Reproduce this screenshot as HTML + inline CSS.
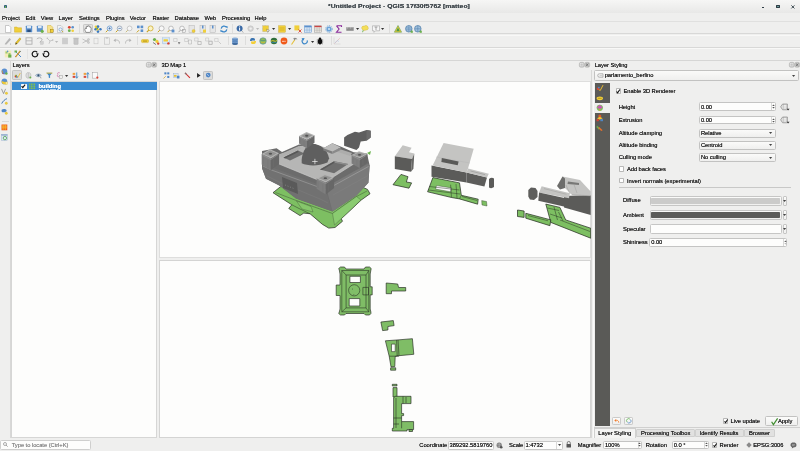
<!DOCTYPE html>
<html><head><meta charset="utf-8"><style>
*{box-sizing:border-box;margin:0;padding:0}
html,body{width:800px;height:451px;overflow:hidden;background:#efefee;font-family:"Liberation Sans",sans-serif;font-size:5.6px;color:#2e3436}
.a{position:absolute}
.t{position:absolute;white-space:nowrap;line-height:1;letter-spacing:-0.05px;text-shadow:0 0 0.3px currentColor}
#w{position:absolute;left:0;top:0;width:800px;height:451px;will-change:transform}
svg{overflow:visible}
</style></head><body><div id="w">
<div class="a" style="left:0.00px;top:0.00px;width:800.00px;height:13.00px;background:linear-gradient(#f6f6f5,#e8e8e7)"></div>
<div class="a" style="left:4.30px;top:4.60px;width:2.60px;height:3.50px;background:#2f5f7a;border-radius:0.8px"></div>
<div class="a" style="left:5.20px;top:6.20px;width:1.20px;height:1.60px;background:#6fb04c"></div>
<div class="t" style="left:328.20px;top:2.93px;font-size:6.1px;color:#434b50;font-weight:bold;letter-spacing:0;transform:scaleX(1.12);transform-origin:0 0">*Untitled Project - QGIS 17f30f5762 [matteo]</div>
<div class="a" style="left:761.60px;top:7.00px;width:2.60px;height:1.00px;background:#2e3c44"></div>
<div class="a" style="left:776.30px;top:4.60px;width:3.60px;height:3.60px;border:1px solid #2e3c44;background:#6a9a9a;border-radius:0.4px"></div>
<svg class="a" style="left:790.5px;top:4.6px" width="3.8" height="3.8" viewBox="0 0 5 5"><path d="M0.5,0.5L4.5,4.5M4.5,0.5L0.5,4.5" stroke="#2e3c44" stroke-width="1.2"/></svg>
<div class="a" style="left:0.00px;top:13.00px;width:800.00px;height:9.00px;background:#efefee"></div>
<div class="t" style="left:2.00px;top:15.88px;font-size:5.8px;color:#222;font-weight:normal;">Pro<u style="text-decoration-thickness:0.5px;text-underline-offset:0.6px">j</u>ect</div>
<div class="t" style="left:25.40px;top:15.88px;font-size:5.8px;color:#222;font-weight:normal;"><u style="text-decoration-thickness:0.5px;text-underline-offset:0.6px">E</u>dit</div>
<div class="t" style="left:40.80px;top:15.88px;font-size:5.8px;color:#222;font-weight:normal;"><u style="text-decoration-thickness:0.5px;text-underline-offset:0.6px">V</u>iew</div>
<div class="t" style="left:58.60px;top:15.88px;font-size:5.8px;color:#222;font-weight:normal;"><u style="text-decoration-thickness:0.5px;text-underline-offset:0.6px">L</u>ayer</div>
<div class="t" style="left:79.10px;top:15.88px;font-size:5.8px;color:#222;font-weight:normal;"><u style="text-decoration-thickness:0.5px;text-underline-offset:0.6px">S</u>ettings</div>
<div class="t" style="left:105.90px;top:15.88px;font-size:5.8px;color:#222;font-weight:normal;"><u style="text-decoration-thickness:0.5px;text-underline-offset:0.6px">P</u>lugins</div>
<div class="t" style="left:129.80px;top:15.88px;font-size:5.8px;color:#222;font-weight:normal;">Vect<u style="text-decoration-thickness:0.5px;text-underline-offset:0.6px">o</u>r</div>
<div class="t" style="left:152.40px;top:15.88px;font-size:5.8px;color:#222;font-weight:normal;"><u style="text-decoration-thickness:0.5px;text-underline-offset:0.6px">R</u>aster</div>
<div class="t" style="left:174.60px;top:15.88px;font-size:5.8px;color:#222;font-weight:normal;"><u style="text-decoration-thickness:0.5px;text-underline-offset:0.6px">D</u>atabase</div>
<div class="t" style="left:204.40px;top:15.88px;font-size:5.8px;color:#222;font-weight:normal;"><u style="text-decoration-thickness:0.5px;text-underline-offset:0.6px">W</u>eb</div>
<div class="t" style="left:221.90px;top:15.88px;font-size:5.8px;color:#222;font-weight:normal;">Pro<u style="text-decoration-thickness:0.5px;text-underline-offset:0.6px">c</u>essing</div>
<div class="t" style="left:254.60px;top:15.88px;font-size:5.8px;color:#222;font-weight:normal;"><u style="text-decoration-thickness:0.5px;text-underline-offset:0.6px">H</u>elp</div>
<div class="a" style="left:0.00px;top:21.30px;width:800.00px;height:13.20px;background:#efefee;border-top:1px solid #e0e0df;border-bottom:1px solid #d8d8d7"></div>
<div class="a" style="left:0.00px;top:34.50px;width:800.00px;height:13.10px;background:#efefee;border-top:0.8px solid #f8f8f7;border-bottom:1px solid #d8d8d7"></div>
<div class="a" style="left:0.00px;top:47.60px;width:800.00px;height:13.10px;background:#efefee;border-top:0.8px solid #f8f8f7;border-bottom:1px solid #d6d6d5"></div>
<div class="a" style="left:82.80px;top:23.80px;width:9.90px;height:9.30px;background:#e2e2e1;border:0.6px solid #c8c8c7;border-radius:1.2px"></div>
<svg class="a" style="left:4.30px;top:24.60px" width="8.00" height="8.00" viewBox="0 0 8 8"><path d="M1.5,0.5h3.5l1.8,1.8v5.2h-5.3z" fill="#fff" stroke="#9a9a9a" stroke-width="0.5"/></svg>
<svg class="a" style="left:14.20px;top:24.60px" width="8.00" height="8.00" viewBox="0 0 8 8"><path d="M0.5,2h2.5l0.8,0.8h3.7v4.4h-7z" fill="#f0cf3a" stroke="#c9a31d" stroke-width="0.4"/></svg>
<svg class="a" style="left:25.20px;top:24.60px" width="8.00" height="8.00" viewBox="0 0 8 8"><rect x="0.8" y="0.8" width="6.4" height="6.4" fill="#5b90cc" rx="0.5"/><rect x="2" y="1" width="4" height="2.3" fill="#dde8f4"/><rect x="2.3" y="4.6" width="3.4" height="2.4" fill="#2b4f7e"/></svg>
<svg class="a" style="left:35.50px;top:24.60px" width="8.00" height="8.00" viewBox="0 0 8 8"><rect x="0.8" y="0.8" width="6" height="6" fill="#5b90cc" rx="0.5"/><rect x="2" y="1" width="3.6" height="2.2" fill="#dde8f4"/><circle cx="6.2" cy="6.3" r="1.6" fill="#6ab04c"/></svg>
<svg class="a" style="left:45.90px;top:24.60px" width="8.00" height="8.00" viewBox="0 0 8 8"><path d="M1.5,0.5h3.5l1.8,1.8v5.2h-5.3z" fill="#f6e18a" stroke="#c9a31d" stroke-width="0.4"/><rect x="4.2" y="4.2" width="3" height="3" fill="#f0cf3a" stroke="#8a6d10" stroke-width="0.4"/></svg>
<svg class="a" style="left:56.20px;top:24.60px" width="8.00" height="8.00" viewBox="0 0 8 8"><path d="M1.5,0.5h3.5l1.8,1.8v5.2h-5.3z" fill="#f4f4f4" stroke="#9a9a9a" stroke-width="0.4"/><circle cx="4.5" cy="4.5" r="1.6" fill="none" stroke="#5b90cc" stroke-width="0.6"/><path d="M5.6,5.6l1.5,1.5" stroke="#c9a31d" stroke-width="0.8"/></svg>
<svg class="a" style="left:66.50px;top:24.60px" width="8.00" height="8.00" viewBox="0 0 8 8"><circle cx="2.3" cy="2.3" r="1.4" fill="#d9412f"/><circle cx="5.7" cy="2.3" r="1.3" fill="#5b90cc"/><circle cx="2.3" cy="5.7" r="1.4" fill="#6ab04c"/><circle cx="5.7" cy="5.7" r="1.3" fill="#f0cf3a"/></svg>
<svg class="a" style="left:83.70px;top:24.60px" width="8.00" height="8.00" viewBox="0 0 8 8"><path d="M2.2,7.4 C1.2,6 0.6,4.6 1,3.6 C1.4,3 2,3.4 2.3,4 L2.4,1.8 C2.5,1 3.4,1 3.5,1.8 L3.6,1.2 C3.7,0.4 4.7,0.4 4.8,1.2 L4.9,1.6 C5.1,1 6,1.1 6,1.9 L6.1,2.6 C6.4,2.1 7.2,2.3 7.2,3 L7,5.2 C6.9,6.4 6.2,7.4 5.2,7.4 Z" fill="#fff" stroke="#444" stroke-width="0.55"/></svg>
<svg class="a" style="left:94.20px;top:24.60px" width="8.00" height="8.00" viewBox="0 0 8 8"><circle cx="2" cy="1.8" r="1.4" fill="#f0d030"/><circle cx="4" cy="1.6" r="1.3" fill="#3a78c0"/><circle cx="1.6" cy="4.3" r="1.3" fill="#3a78c0"/><circle cx="6.4" cy="4.3" r="1.3" fill="#3a78c0"/><circle cx="4" cy="6.6" r="1.3" fill="#3a78c0"/><path d="M2.6,2.6 L5.6,4.3 L2.6,6z" fill="#e8c830"/><circle cx="3.2" cy="3.4" r="0.8" fill="#5aa040"/></svg>
<svg class="a" style="left:105.10px;top:24.60px" width="8.00" height="8.00" viewBox="0 0 8 8"><circle cx="4.6" cy="3.4" r="2.4" fill="#e9f0f8" stroke="#5b90cc" stroke-width="0.7"/><path d="M3.4,3.4h2.4M4.6,2.2v2.4" stroke="#3a6aa6" stroke-width="0.7"/><path d="M2.8,5.2L0.8,7.2" stroke="#c9a31d" stroke-width="1"/></svg>
<svg class="a" style="left:115.10px;top:24.60px" width="8.00" height="8.00" viewBox="0 0 8 8"><circle cx="4.6" cy="3.4" r="2.4" fill="#eef2f6" stroke="#7a8aa0" stroke-width="0.6"/><path d="M3.4,3.4h2.4" stroke="#3a6aa6" stroke-width="0.7"/><path d="M2.8,5.2L0.8,7.2" stroke="#c9a31d" stroke-width="1"/></svg>
<svg class="a" style="left:125.40px;top:24.60px" width="8.00" height="8.00" viewBox="0 0 8 8"><circle cx="4.6" cy="3.4" r="2.4" fill="#f6f6f6" stroke="#a0a0a0" stroke-width="0.5"/><path d="M2.8,5.2L0.8,7.2" stroke="#c0b060" stroke-width="0.8"/></svg>
<svg class="a" style="left:136.40px;top:24.60px" width="8.00" height="8.00" viewBox="0 0 8 8"><rect x="1" y="0.6" width="2.6" height="2.6" fill="#5b90cc"/><rect x="4.6" y="0.6" width="2.6" height="2.6" fill="#5b90cc"/><rect x="4.6" y="4.4" width="2.6" height="2.6" fill="#5b90cc"/><path d="M0.8,7.4L3,5.2" stroke="#c9a31d" stroke-width="1"/></svg>
<svg class="a" style="left:146.40px;top:24.60px" width="8.00" height="8.00" viewBox="0 0 8 8"><circle cx="4.6" cy="3.4" r="2.5" fill="#fbf3c4" stroke="#c9a31d" stroke-width="0.7"/><path d="M2.8,5.2L0.8,7.2" stroke="#c9a31d" stroke-width="1.1"/></svg>
<svg class="a" style="left:157.00px;top:24.60px" width="8.00" height="8.00" viewBox="0 0 8 8"><circle cx="4.6" cy="3.4" r="2.5" fill="#f8f8f8" stroke="#8a8a8a" stroke-width="0.5"/><path d="M2.8,5.2L0.8,7.2" stroke="#c9a31d" stroke-width="1"/></svg>
<svg class="a" style="left:167.40px;top:24.60px" width="8.00" height="8.00" viewBox="0 0 8 8"><circle cx="4" cy="3.4" r="2.3" fill="#f8f8f8" stroke="#888" stroke-width="0.5"/><path d="M2.3,5.2L0.6,7.2" stroke="#c9a31d" stroke-width="0.9"/><rect x="4.6" y="4.6" width="2.8" height="2.8" fill="#5b90cc"/></svg>
<svg class="a" style="left:177.70px;top:24.60px" width="8.00" height="8.00" viewBox="0 0 8 8"><circle cx="4" cy="3.4" r="2.3" fill="#f8f8f8" stroke="#888" stroke-width="0.5"/><path d="M2.3,5.2L0.6,7.2" stroke="#999" stroke-width="0.8"/><rect x="4.6" y="4.6" width="2.8" height="2.8" fill="none" stroke="#888" stroke-width="0.4"/></svg>
<svg class="a" style="left:188.00px;top:24.60px" width="8.00" height="8.00" viewBox="0 0 8 8"><rect x="1" y="0.5" width="5.5" height="7" fill="#e6e6e6" stroke="#a8a8a8" stroke-width="0.4"/><circle cx="5.6" cy="6" r="1.6" fill="#f0cf3a" stroke="#c9a31d" stroke-width="0.3"/></svg>
<svg class="a" style="left:199.30px;top:24.60px" width="8.00" height="8.00" viewBox="0 0 8 8"><rect x="1" y="0.5" width="5.5" height="7" fill="#e6e6e6" stroke="#a8a8a8" stroke-width="0.4"/><rect x="3" y="0.5" width="1.5" height="3" fill="#5b90cc"/><rect x="4" y="4.6" width="3" height="3" fill="#f0cf3a"/></svg>
<svg class="a" style="left:209.00px;top:24.60px" width="8.00" height="8.00" viewBox="0 0 8 8"><rect x="1" y="0.5" width="5.5" height="7" fill="#e6e6e6" stroke="#a8a8a8" stroke-width="0.4"/><rect x="3" y="0.5" width="1.5" height="3" fill="#5b90cc"/></svg>
<svg class="a" style="left:219.80px;top:24.60px" width="8.00" height="8.00" viewBox="0 0 8 8"><path d="M1.2,3.6 A2.9,2.9 0 0 1 6.5,2.4" fill="none" stroke="#3a86c8" stroke-width="1.2"/><path d="M6.8,4.4 A2.9,2.9 0 0 1 1.5,5.6" fill="none" stroke="#3a86c8" stroke-width="1.2"/><path d="M5.2,1.2h2.4v2.4z M2.8,6.8h-2.4v-2.4z" fill="#3a86c8"/></svg>
<svg class="a" style="left:236.20px;top:24.60px" width="8.00" height="8.00" viewBox="0 0 8 8"><circle cx="3.6" cy="3.6" r="3" fill="#3a6aa6"/><rect x="3.1" y="3" width="1" height="2.6" fill="#fff"/><circle cx="3.6" cy="1.9" r="0.55" fill="#fff"/><path d="M5.8,6.2l1.6,1.2" stroke="#666" stroke-width="0.5"/></svg>
<svg class="a" style="left:247.00px;top:24.60px" width="8.00" height="8.00" viewBox="0 0 8 8"><circle cx="3.6" cy="3.6" r="2.8" fill="#d4d4d4" stroke="#b0b0b0" stroke-width="0.4"/><circle cx="3.6" cy="3.6" r="1.2" fill="#f0f0f0"/></svg>
<svg class="a" style="left:262.40px;top:24.60px" width="8.00" height="8.00" viewBox="0 0 8 8"><rect x="0.6" y="0.6" width="6" height="6" fill="#f0cf3a" stroke="#8e8e8e" stroke-width="0.4" stroke-dasharray="0.8,0.5"/><path d="M4.5,4.2l3,1.2l-1.2,0.6l-0.6,1.4z" fill="#fff" stroke="#333" stroke-width="0.3"/></svg>
<svg class="a" style="left:278.20px;top:24.60px" width="8.00" height="8.00" viewBox="0 0 8 8"><rect x="0.6" y="0.8" width="6.8" height="6.4" fill="#f0cf3a" stroke="#c9a31d" stroke-width="0.4"/><path d="M1.5,3h5M1.5,5h5" stroke="#b08d10" stroke-width="0.4"/></svg>
<svg class="a" style="left:293.70px;top:24.60px" width="8.00" height="8.00" viewBox="0 0 8 8"><rect x="0.4" y="0.4" width="5" height="5" fill="#f0cf3a"/><path d="M4.5,4.5l3,3M7.5,4.5l-3,3" stroke="#d9412f" stroke-width="0.9"/></svg>
<svg class="a" style="left:304.40px;top:24.60px" width="8.00" height="8.00" viewBox="0 0 8 8"><rect x="0.5" y="0.8" width="7" height="6.4" fill="#e8f0f8" stroke="#5b90cc" stroke-width="0.5"/><rect x="0.5" y="0.8" width="7" height="1.6" fill="#5b90cc"/><path d="M0.5,4.2h7M0.5,5.7h7M3,2.4v4.8M5.3,2.4v4.8" stroke="#5b90cc" stroke-width="0.35"/></svg>
<svg class="a" style="left:314.00px;top:24.60px" width="8.00" height="8.00" viewBox="0 0 8 8"><rect x="0.5" y="0.8" width="7" height="6.4" fill="#f0ece4" stroke="#999" stroke-width="0.5"/><rect x="0.5" y="0.8" width="7" height="1.4" fill="#c44"/><path d="M0.5,4h7M0.5,5.6h7M3,2.2v5M5.3,2.2v5" stroke="#999" stroke-width="0.35"/></svg>
<svg class="a" style="left:324.80px;top:24.60px" width="8.00" height="8.00" viewBox="0 0 8 8"><circle cx="4" cy="4" r="2.6" fill="#6aa3d9"/><circle cx="4" cy="4" r="3.3" fill="none" stroke="#6aa3d9" stroke-width="1" stroke-dasharray="1,0.9"/><circle cx="4" cy="4" r="1" fill="#d8e8f6"/></svg>
<svg class="a" style="left:335.40px;top:24.60px" width="8.00" height="8.00" viewBox="0 0 8 8"><path d="M1.5,0.8h5v1.2 M6.5,7.2h-5l2.6,-3.2l-2.6,-3.2" fill="none" stroke="#8a2a9a" stroke-width="1.1"/></svg>
<svg class="a" style="left:345.80px;top:24.60px" width="8.00" height="8.00" viewBox="0 0 8 8"><rect x="0.3" y="2.2" width="7.4" height="3.6" fill="#8c8c8c"/><path d="M1.5,2.2v1.4M3,2.2v1M4.5,2.2v1.4M6,2.2v1" stroke="#eee" stroke-width="0.4"/></svg>
<svg class="a" style="left:361.20px;top:24.60px" width="8.00" height="8.00" viewBox="0 0 8 8"><path d="M1,4 C0,2.5 1.5,0.5 3.2,1.2 C4,0 6.8,0.4 7,2.2 C8,3.6 6.6,5.3 5,5 C4,5.6 2.5,5.6 2,5 z" fill="#f3de5a" stroke="#c9a51d" stroke-width="0.35"/><path d="M2.2,5.2l-0.6,2" stroke="#6ab04c" stroke-width="0.9"/></svg>
<svg class="a" style="left:371.50px;top:24.60px" width="8.00" height="8.00" viewBox="0 0 8 8"><path d="M0.5,0.8h7v5h-4l-1.5,1.6v-1.6h-1.5z" fill="#f6f6f6" stroke="#8a8a8a" stroke-width="0.45"/><path d="M2.5,2h3M4,2v3" stroke="#777" stroke-width="0.6"/></svg>
<svg class="a" style="left:394.00px;top:24.60px" width="8.00" height="8.00" viewBox="0 0 8 8"><path d="M4,0.5 L7.6,7.2 H0.4z" fill="#f0cf3a" stroke="#3a8a3a" stroke-width="0.5"/><path d="M4,2.6 L5.8,6.2 H2.2z" fill="#4a9a4a"/></svg>
<svg class="a" style="left:404.50px;top:24.60px" width="8.00" height="8.00" viewBox="0 0 8 8"><circle cx="3.8" cy="3.8" r="3.3" fill="#9fbfdc" stroke="#3c6e9e" stroke-width="0.6"/><path d="M1,3h5.6M1,4.8h5.6M3.8,0.5v6.6" stroke="#3c6e9e" stroke-width="0.35"/><rect x="5.6" y="5.6" width="2.2" height="2.2" fill="#6ab04c"/></svg>
<svg class="a" style="left:414.20px;top:24.60px" width="8.00" height="8.00" viewBox="0 0 8 8"><circle cx="3.8" cy="3.8" r="3.3" fill="#9fbfdc" stroke="#3c6e9e" stroke-width="0.6"/><path d="M3.8,0.5v6.6M1,3.8h5.6" stroke="#3c6e9e" stroke-width="0.4"/><rect x="5.6" y="5.6" width="2.2" height="2.2" fill="#6ab04c"/></svg>
<div class="a" style="left:79.00px;top:24.00px;width:0.70px;height:9.00px;background:#dddddc"></div>
<div class="a" style="left:232.00px;top:24.00px;width:0.70px;height:9.00px;background:#dddddc"></div>
<div class="a" style="left:389.00px;top:24.00px;width:0.70px;height:9.00px;background:#dddddc"></div>
<svg class="a" style="left:256.40px;top:27.90px" width="3.2" height="2" viewBox="0 0 3.2 2"><path d="M0,0H3.2L1.6,2z" fill="#bbb"/></svg>
<svg class="a" style="left:272.40px;top:27.90px" width="3.2" height="2" viewBox="0 0 3.2 2"><path d="M0,0H3.2L1.6,2z" fill="#333"/></svg>
<svg class="a" style="left:287.90px;top:27.90px" width="3.2" height="2" viewBox="0 0 3.2 2"><path d="M0,0H3.2L1.6,2z" fill="#333"/></svg>
<svg class="a" style="left:356.00px;top:27.90px" width="3.2" height="2" viewBox="0 0 3.2 2"><path d="M0,0H3.2L1.6,2z" fill="#333"/></svg>
<svg class="a" style="left:381.40px;top:27.90px" width="3.2" height="2" viewBox="0 0 3.2 2"><path d="M0,0H3.2L1.6,2z" fill="#333"/></svg>
<svg class="a" style="left:4.30px;top:37.20px" width="8.00" height="8.00" viewBox="0 0 8 8"><path d="M1,6.5 L5.5,1 L7,2.4 L2.5,7.6 L0.8,7.6z" fill="#b6b6b6"/><circle cx="6.6" cy="7" r="0.5" fill="#999"/></svg>
<svg class="a" style="left:14.20px;top:37.20px" width="8.00" height="8.00" viewBox="0 0 8 8"><path d="M1.5,7.4 L1.8,5.6 L5.8,0.8 L7,1.9 L3.1,6.8z" fill="#e8c52c" stroke="#9b7d10" stroke-width="0.35"/><path d="M1.5,7.4 L1.8,5.6 L3.1,6.8z" fill="#333"/></svg>
<svg class="a" style="left:24.50px;top:37.20px" width="8.00" height="8.00" viewBox="0 0 8 8"><rect x="1" y="0.8" width="6" height="6.4" fill="none" stroke="#b0b0b0" stroke-width="0.9"/><path d="M1,3.8h6" stroke="#b0b0b0" stroke-width="0.8"/></svg>
<svg class="a" style="left:35.50px;top:37.20px" width="8.00" height="8.00" viewBox="0 0 8 8"><path d="M0.8,2 C2,0.4 5,0.6 6,2 C7,3.6 4,4 4,5.5" fill="none" stroke="#b8b8b8" stroke-width="1"/><rect x="4.6" y="4.6" width="2.6" height="2.6" fill="#d0d0d0" stroke="#aaa" stroke-width="0.3"/></svg>
<svg class="a" style="left:45.90px;top:37.20px" width="8.00" height="8.00" viewBox="0 0 8 8"><path d="M1,1 L4,4 L3,6.8 M4,4 L7,3" fill="none" stroke="#b8b8b8" stroke-width="0.7"/><circle cx="1.3" cy="1.3" r="0.7" fill="#bbb"/><circle cx="6.8" cy="3" r="0.7" fill="#bbb"/></svg>
<svg class="a" style="left:61.00px;top:37.20px" width="8.00" height="8.00" viewBox="0 0 8 8"><rect x="1.2" y="0.8" width="5.6" height="6.4" fill="#c7c7c7"/><path d="M2,2h4M2,4h4M2,6h4" stroke="#ddd" stroke-width="0.5"/></svg>
<svg class="a" style="left:71.60px;top:37.20px" width="8.00" height="8.00" viewBox="0 0 8 8"><rect x="1.8" y="1.8" width="4.4" height="5.6" rx="0.6" fill="#c6c6c6" stroke="#aaa" stroke-width="0.3"/><rect x="1.3" y="0.8" width="5.4" height="1" fill="#b6b6b6"/></svg>
<svg class="a" style="left:82.30px;top:37.20px" width="8.00" height="8.00" viewBox="0 0 8 8"><path d="M0.5,2 L7,5.5 M0.5,6 L7,2.5" stroke="#a8a8a8" stroke-width="0.6"/><circle cx="6.5" cy="2.5" r="1" fill="none" stroke="#a8a8a8" stroke-width="0.5"/><circle cx="6.5" cy="5.5" r="1" fill="none" stroke="#a8a8a8" stroke-width="0.5"/></svg>
<svg class="a" style="left:92.30px;top:37.20px" width="8.00" height="8.00" viewBox="0 0 8 8"><rect x="2" y="1.2" width="4" height="5.6" fill="none" stroke="#c6c6c6" stroke-width="0.6"/></svg>
<svg class="a" style="left:103.00px;top:37.20px" width="8.00" height="8.00" viewBox="0 0 8 8"><rect x="1.6" y="0.8" width="4.8" height="6.4" fill="none" stroke="#c0c0c0" stroke-width="0.6"/><rect x="3" y="0.5" width="2" height="1" fill="#bbb"/></svg>
<svg class="a" style="left:113.40px;top:37.20px" width="8.00" height="8.00" viewBox="0 0 8 8"><path d="M6.5,6.5 C6.5,3 4,2.6 1.6,3.4" fill="none" stroke="#b4b4b4" stroke-width="0.9"/><path d="M0.5,3.6 L2.6,1.6 L2.8,5z" fill="#b4b4b4"/></svg>
<svg class="a" style="left:124.00px;top:37.20px" width="8.00" height="8.00" viewBox="0 0 8 8"><path d="M1.5,6.5 C1.5,3 4,2.6 6.4,3.4" fill="none" stroke="#b4b4b4" stroke-width="0.9"/><path d="M7.5,3.6 L5.4,1.6 L5.2,5z" fill="#b4b4b4"/></svg>
<svg class="a" style="left:140.50px;top:37.20px" width="8.00" height="8.00" viewBox="0 0 8 8"><rect x="0.5" y="2.6" width="7" height="3" rx="0.8" fill="#f0cf3a" stroke="#c9a31d" stroke-width="0.4"/><path d="M2,4.1h4" stroke="#7a5a00" stroke-width="0.5"/></svg>
<svg class="a" style="left:151.60px;top:37.20px" width="8.00" height="8.00" viewBox="0 0 8 8"><circle cx="2.5" cy="2.5" r="1.6" fill="#6ab04c"/><circle cx="5" cy="4.4" r="1.6" fill="#f0cf3a"/><circle cx="6.2" cy="6.6" r="1.2" fill="#d9412f"/><path d="M1,5.5 L4,7.6" stroke="#333" stroke-width="0.6"/></svg>
<svg class="a" style="left:162.20px;top:37.20px" width="8.00" height="8.00" viewBox="0 0 8 8"><rect x="0.5" y="0.7" width="7" height="6" fill="#d8e8f8" stroke="#6a9ad0" stroke-width="0.45" stroke-dasharray="0.7,0.4"/><rect x="1.5" y="2.2" width="4.5" height="2.4" rx="0.6" fill="#f0cf3a"/><circle cx="6.4" cy="6.4" r="1.2" fill="#d9412f"/></svg>
<svg class="a" style="left:172.90px;top:37.20px" width="8.00" height="8.00" viewBox="0 0 8 8"><path d="M0.6,1.5h3.5v3h-3.5z" fill="none" stroke="#bbb" stroke-width="0.5"/><path d="M5,5l2.5,0.4l-1,1l-0.5,1.2z" fill="#666"/></svg>
<svg class="a" style="left:183.50px;top:37.20px" width="8.00" height="8.00" viewBox="0 0 8 8"><path d="M0.6,1.5h3.5v3h-3.5z" fill="none" stroke="#bbb" stroke-width="0.5"/><path d="M4.5,3h3v4h-3z" fill="none" stroke="#aaa" stroke-width="0.5"/></svg>
<svg class="a" style="left:194.20px;top:37.20px" width="8.00" height="8.00" viewBox="0 0 8 8"><path d="M0.6,1h3.5v3h-3.5z" fill="none" stroke="#bbb" stroke-width="0.5"/><path d="M3.8,4.5h3.4v3h-3.4z" fill="none" stroke="#999" stroke-width="0.5"/></svg>
<svg class="a" style="left:204.50px;top:37.20px" width="8.00" height="8.00" viewBox="0 0 8 8"><path d="M0.6,1h3v3h-3z" fill="none" stroke="#bbb" stroke-width="0.5"/><path d="M3.8,4.2h3.4v3.2h-3.4z" fill="none" stroke="#999" stroke-width="0.6"/></svg>
<svg class="a" style="left:214.30px;top:37.20px" width="8.00" height="8.00" viewBox="0 0 8 8"><path d="M0.6,1.5h3.5v3h-3.5z" fill="none" stroke="#c0c0c0" stroke-width="0.5"/><path d="M4.5,4.5l2.5,2.5" stroke="#b0b0b0" stroke-width="0.6"/></svg>
<svg class="a" style="left:231.40px;top:37.20px" width="8.00" height="8.00" viewBox="0 0 8 8"><rect x="1.2" y="1.4" width="5.6" height="5.6" fill="#4f7fb8"/><ellipse cx="4" cy="1.5" rx="2.8" ry="1" fill="#84aad6"/><ellipse cx="4" cy="7" rx="2.8" ry="0.9" fill="#3b6699"/><path d="M1.2,3.6 Q4,4.6 6.8,3.6 M1.2,5.3 Q4,6.3 6.8,5.3" fill="none" stroke="#9ec0e6" stroke-width="0.35"/></svg>
<svg class="a" style="left:248.50px;top:37.20px" width="8.00" height="8.00" viewBox="0 0 8 8"><path d="M1,4 C1,1.5 2,1 4,1 C6,1 6,2 6,3.6 H2.8 V4 z" fill="#3b74b0"/><path d="M7,4 C7,6.5 6,7 4,7 C2,7 2,6 2,4.4 H5.2 V4 z" fill="#f4cf36"/></svg>
<svg class="a" style="left:259.00px;top:37.20px" width="8.00" height="8.00" viewBox="0 0 8 8"><circle cx="4" cy="4" r="3.3" fill="#8fbf5a" stroke="#4f7faf" stroke-width="0.5"/><path d="M1.2,3 Q4,4.5 6.8,3" fill="none" stroke="#2f6f9f" stroke-width="0.5"/><path d="M2,5.5 h4" stroke="#d9b32f" stroke-width="0.6"/></svg>
<svg class="a" style="left:269.90px;top:37.20px" width="8.00" height="8.00" viewBox="0 0 8 8"><circle cx="4" cy="4" r="3.3" fill="#2f6f3a"/><path d="M1,4.2 C3,2.5 5,5.5 7,3.6" fill="none" stroke="#f0d030" stroke-width="1"/><path d="M1.2,5.4 h5.6" stroke="#3d8fd0" stroke-width="0.6"/></svg>
<svg class="a" style="left:279.50px;top:37.20px" width="8.00" height="8.00" viewBox="0 0 8 8"><circle cx="4" cy="4" r="3.4" fill="#f05a1a"/><path d="M2,4.3 h4" stroke="#fff" stroke-width="0.9" stroke-dasharray="0.8,0.4"/></svg>
<svg class="a" style="left:289.50px;top:37.20px" width="8.00" height="8.00" viewBox="0 0 8 8"><path d="M1.5,7.5 L5,2.5" stroke="#e6c23a" stroke-width="1.1"/><path d="M3.2,1.6 C4.8,0 6.8,1 7.4,2.6 L5.5,2 L4.8,3.4z" fill="#8a8a8a"/></svg>
<svg class="a" style="left:301.00px;top:37.20px" width="8.00" height="8.00" viewBox="0 0 8 8"><path d="M2,2.2 A2.6,2.6 0 1 0 6.2,3.4" fill="none" stroke="#3a86c8" stroke-width="1.1"/><path d="M0.5,1.2 L3.6,1 L2.4,3.8z" fill="#3a86c8"/></svg>
<svg class="a" style="left:316.30px;top:37.20px" width="8.00" height="8.00" viewBox="0 0 8 8"><ellipse cx="4" cy="4.6" rx="2.2" ry="2.8" fill="#111"/><circle cx="4" cy="1.6" r="1.2" fill="#111"/><path d="M0.8,3h6.4M0.8,5h6.4M1.2,7l1.4,-1M6.8,7l-1.4,-1" stroke="#111" stroke-width="0.5"/></svg>
<svg class="a" style="left:332.50px;top:37.20px" width="8.00" height="8.00" viewBox="0 0 8 8"><path d="M1,0.5 V7 H7.5" fill="none" stroke="#c8c8c8" stroke-width="0.5"/><path d="M1.5,6.5 L6.8,1.2" stroke="#e4a8a8" stroke-width="0.6"/><path d="M2,6 L4,3.5 L6,4.5" fill="none" stroke="#a8c8e8" stroke-width="0.5"/></svg>
<div class="a" style="left:136.60px;top:36.00px;width:0.70px;height:9.00px;background:#dddddc"></div>
<div class="a" style="left:227.50px;top:36.00px;width:0.70px;height:9.00px;background:#dddddc"></div>
<div class="a" style="left:245.00px;top:36.00px;width:0.70px;height:9.00px;background:#dddddc"></div>
<div class="a" style="left:330.80px;top:36.00px;width:0.70px;height:9.00px;background:#dddddc"></div>
<svg class="a" style="left:55.40px;top:40.50px" width="3.2" height="2" viewBox="0 0 3.2 2"><path d="M0,0H3.2L1.6,2z" fill="#bbb"/></svg>
<svg class="a" style="left:310.80px;top:40.50px" width="3.2" height="2" viewBox="0 0 3.2 2"><path d="M0,0H3.2L1.6,2z" fill="#333"/></svg>
<svg class="a" style="left:4.00px;top:49.80px" width="8.00" height="8.00" viewBox="0 0 8 8"><rect x="0.8" y="0.6" width="6.4" height="6.8" fill="#f3ecb8"/><path d="M1.5,1.5 h2 v2 h-2z M4.5,3 h2 v2 h-2z" fill="#9cc870"/><rect x="4.2" y="4.6" width="3.2" height="3" fill="#6ab04c"/><circle cx="3.6" cy="1.4" r="0.8" fill="#5b90cc"/></svg>
<svg class="a" style="left:14.00px;top:49.80px" width="8.00" height="8.00" viewBox="0 0 8 8"><path d="M1,1 L7,7 M7,1 L1,7" stroke="#4a88c8" stroke-width="1"/><path d="M1.5,7.2 L6.2,0.8" stroke="#d99a2a" stroke-width="1.2"/><rect x="0.5" y="0.5" width="2.5" height="2" fill="#6ab04c"/></svg>
<svg class="a" style="left:31.20px;top:49.80px" width="8.00" height="8.00" viewBox="0 0 8 8"><path d="M6.7,4.6 A2.8,2.8 0 1 1 6.2,2.4" fill="none" stroke="#111" stroke-width="1.15"/><path d="M5,3.2 L7.8,3.4 L6.6,5.6z" fill="#111"/></svg>
<svg class="a" style="left:42.30px;top:49.80px" width="8.00" height="8.00" viewBox="0 0 8 8"><path d="M1.3,4.6 A2.8,2.8 0 1 0 1.8,2.4" fill="none" stroke="#111" stroke-width="1.15"/><path d="M3,3.2 L0.2,3.4 L1.4,5.6z" fill="#111"/></svg>
<div class="a" style="left:26.60px;top:49.00px;width:0.60px;height:10.00px;background:#e4e4e3"></div>
<div class="a" style="left:10.00px;top:60.00px;width:0.80px;height:378.00px;background:#d8d8d7"></div>
<svg class="a" style="left:1.20px;top:67.90px" width="6.80" height="6.80" viewBox="0 0 8 8"><circle cx="4" cy="4" r="3.4" fill="#5a8fd0"/><path d="M0.8,3 C2,2 2.5,5 1.5,6.5z" fill="#e8a030"/><path d="M1,4.5 C2,6 3,7 4.5,7.4 L2,6.8z" fill="#d83a2a"/><circle cx="6.4" cy="6.4" r="1.4" fill="#6ab04c"/></svg>
<svg class="a" style="left:1.20px;top:77.80px" width="6.80" height="6.80" viewBox="0 0 8 8"><circle cx="4" cy="4" r="3.4" fill="#5a8fd0"/><path d="M0.8,4 C2,3 5,6 7.2,4.6 C7,6.6 5.5,7.5 4,7.5 C2,7.5 1,6 0.8,4z" fill="#f0c830"/><rect x="5.2" y="4.6" width="2.6" height="3.2" fill="#f6e89a" stroke="#c9a51d" stroke-width="0.3"/></svg>
<svg class="a" style="left:1.20px;top:87.70px" width="6.80" height="6.80" viewBox="0 0 8 8"><path d="M0.6,1 L3,6.6 L5.4,1" fill="none" stroke="#777" stroke-width="0.8"/><circle cx="6.4" cy="6.2" r="1.4" fill="#f0cf3a" stroke="#c9a51d" stroke-width="0.3"/></svg>
<svg class="a" style="left:1.20px;top:97.70px" width="6.80" height="6.80" viewBox="0 0 8 8"><path d="M0.8,6.6 C2,4 4.5,1.5 7,0.8" fill="none" stroke="#3a6fb0" stroke-width="1.1"/><circle cx="6.2" cy="6.2" r="1.4" fill="#f0cf3a" stroke="#c9a51d" stroke-width="0.3"/></svg>
<svg class="a" style="left:1.20px;top:108.20px" width="6.80" height="6.80" viewBox="0 0 8 8"><path d="M0.8,2 C2,0.5 6,0.8 6.6,2.6 C7,4.6 4,5.4 1.6,5 C0.6,4.6 0.5,3 0.8,2z" fill="#4f86c6"/><circle cx="6.2" cy="6.2" r="1.4" fill="#f0cf3a" stroke="#c9a51d" stroke-width="0.3"/></svg>
<svg class="a" style="left:1.20px;top:124.30px" width="6.80" height="6.80" viewBox="0 0 8 8"><rect x="0.6" y="0.6" width="6.8" height="6.8" fill="#f05a1a"/><path d="M1,2.5h6M1,4.5h6M2.5,1v6M5,1v6" stroke="#f8d030" stroke-width="0.8"/></svg>
<svg class="a" style="left:1.20px;top:134.30px" width="6.80" height="6.80" viewBox="0 0 8 8"><rect x="0.6" y="0.6" width="6.8" height="6.8" fill="#dfe8f4" stroke="#7a9ac0" stroke-width="0.4"/><rect x="0.6" y="0.6" width="6.8" height="1.2" fill="#7a9ac0"/><circle cx="4.6" cy="4.8" r="2" fill="none" stroke="#4aa04a" stroke-width="0.9"/></svg>
<div class="a" style="left:2.00px;top:120.50px;width:7.00px;height:0.80px;background:#d8d8d7"></div>
<div class="t" style="left:12.50px;top:62.98px;font-size:5.8px;color:#222;font-weight:normal;">Layers</div>
<svg class="a" style="left:145.5px;top:62.3px" width="11" height="5.6" viewBox="0 0 11 5.6"><rect x="0.3" y="0.3" width="5" height="5" rx="1.6" fill="#c4c4c3" stroke="#a6a6a5" stroke-width="0.4"/><rect x="1.6" y="1.6" width="2.4" height="2.4" fill="none" stroke="#eee" stroke-width="0.45"/><rect x="5.7" y="0.3" width="5" height="5" rx="1.6" fill="#c4c4c3" stroke="#a6a6a5" stroke-width="0.4"/><path d="M7,1.6L9.4,4M9.4,1.6L7,4" stroke="#555" stroke-width="0.6"/></svg>
<div class="a" style="left:12.40px;top:70.40px;width:10.00px;height:9.80px;background:#dcdcdb;border:0.6px solid #c4c4c3;border-radius:1.2px"></div>
<svg class="a" style="left:14.00px;top:71.90px" width="6.80" height="6.80" viewBox="0 0 8 8"><path d="M1,5 C1.5,3 3,3.5 3.5,5 L4.5,6.5 L7.4,1.2" fill="none" stroke="#f0c030" stroke-width="1"/><circle cx="2" cy="5.4" r="1.2" fill="#d8412f"/><circle cx="3.4" cy="5.8" r="1" fill="#4f86c6"/><circle cx="2.6" cy="4.2" r="0.9" fill="#6ab04c"/></svg>
<svg class="a" style="left:24.60px;top:71.90px" width="6.80" height="6.80" viewBox="0 0 8 8"><path d="M2.5,0.8 C0.5,2 0.5,6 2.5,7.2 h3 C7.5,6 7.5,2 5.5,0.8z" fill="#ddd" stroke="#999" stroke-width="0.45"/><path d="M4,1v6" stroke="#999" stroke-width="0.4"/><circle cx="6.3" cy="6.4" r="1.2" fill="#6ab04c"/></svg>
<svg class="a" style="left:35.10px;top:71.90px" width="6.80" height="6.80" viewBox="0 0 8 8"><path d="M0.5,4 C2,1.8 6,1.8 7.5,4 C6,6.2 2,6.2 0.5,4z" fill="#c9d6e6" stroke="#4a6a8a" stroke-width="0.45"/><circle cx="4" cy="4" r="1.3" fill="#2f4f6f"/><path d="M6,6.5l1.5,0.5" stroke="#333" stroke-width="0.5"/></svg>
<svg class="a" style="left:45.60px;top:71.90px" width="6.80" height="6.80" viewBox="0 0 8 8"><path d="M0.5,0.8 H7.5 L4.8,4 V7.4 L3.2,6.6 V4z" fill="#3a86c8"/><rect x="0.5" y="0.8" width="7" height="1" fill="#f0c030"/></svg>
<svg class="a" style="left:56.10px;top:71.90px" width="6.80" height="6.80" viewBox="0 0 8 8"><path d="M4.5,1 C2.5,0 1,1.5 2.4,3 C0.5,4 1.5,6 3.6,5.6" fill="none" stroke="#c85a9a" stroke-width="0.7"/><rect x="4" y="4.2" width="3.4" height="3.2" fill="none" stroke="#888" stroke-width="0.45"/></svg>
<svg class="a" style="left:71.60px;top:71.90px" width="6.80" height="6.80" viewBox="0 0 8 8"><rect x="0.8" y="1" width="3" height="2.4" fill="#f0a040"/><rect x="0.8" y="4.5" width="3" height="2.4" fill="#d84a3a"/><path d="M5.6,0.5V6.6M4.2,5.2L5.6,7.4L7,5.2" fill="none" stroke="#3a86c8" stroke-width="1"/></svg>
<svg class="a" style="left:82.60px;top:71.90px" width="6.80" height="6.80" viewBox="0 0 8 8"><rect x="0.8" y="1" width="3" height="2.4" fill="#f0a040"/><rect x="0.8" y="4.5" width="3" height="2.4" fill="#d84a3a"/><path d="M5.6,7.5V1.4M4.2,2.8L5.6,0.6L7,2.8" fill="none" stroke="#3a86c8" stroke-width="1"/></svg>
<svg class="a" style="left:92.30px;top:71.90px" width="6.80" height="6.80" viewBox="0 0 8 8"><rect x="0.8" y="0.6" width="5.4" height="6.6" fill="#fafafa" stroke="#888" stroke-width="0.45"/><circle cx="6.3" cy="6.5" r="1.3" fill="#e03a2a"/></svg>
<svg class="a" style="left:65.40px;top:74.60px" width="3.2" height="2" viewBox="0 0 3.2 2"><path d="M0,0H3.2L1.6,2z" fill="#333"/></svg>
<div class="a" style="left:10.60px;top:81.00px;width:146.60px;height:357.40px;background:#fdfdfc;border:0.8px solid #d6d6d5"></div>
<div class="a" style="left:11.60px;top:82.00px;width:145.00px;height:7.80px;background:#3a8bd0"></div>
<div class="a" style="left:20.90px;top:83.70px;width:5.70px;height:5.20px;background:#fbfbfb;border-radius:0.5px"></div>
<svg class="a" style="left:21.4px;top:84.2px" width="4.6" height="4.2" viewBox="0 0 4.6 4.2"><path d="M0.6,2.2 L1.8,3.6 L4.1,0.6" fill="none" stroke="#111" stroke-width="1.15"/></svg>
<svg class="a" style="left:29.2px;top:82.6px" width="6.3" height="7" viewBox="0 0 6.3 7"><path d="M0.8,0.5V6.5M2.4,0.5V6.5M4,0.5V6.5M5.6,0.5V6.5" stroke="#88c440" stroke-width="1" stroke-dasharray="1.6,0.4"/></svg>
<div class="t" style="left:38.60px;top:83.90px;font-size:5.75px;color:#fff;font-weight:bold;letter-spacing:0">building</div>
<div class="a" style="left:38.60px;top:88.90px;width:22.40px;height:0.70px;background:repeating-linear-gradient(90deg,rgba(225,238,250,0.75) 0 1px,transparent 1px 1.5px)"></div>
<div class="t" style="left:161.50px;top:62.98px;font-size:5.8px;color:#222;font-weight:normal;">3D Map 1</div>
<svg class="a" style="left:579px;top:62.1px" width="11" height="5.6" viewBox="0 0 11 5.6"><rect x="0.3" y="0.3" width="5" height="5" rx="1.6" fill="#c4c4c3" stroke="#a6a6a5" stroke-width="0.4"/><rect x="1.6" y="1.6" width="2.4" height="2.4" fill="none" stroke="#eee" stroke-width="0.45"/><rect x="5.7" y="0.3" width="5" height="5" rx="1.6" fill="#c4c4c3" stroke="#a6a6a5" stroke-width="0.4"/><path d="M7,1.6L9.4,4M9.4,1.6L7,4" stroke="#555" stroke-width="0.6"/></svg>
<div class="a" style="left:203.00px;top:70.50px;width:10.00px;height:9.80px;background:#dcdcdb;border:0.6px solid #c4c4c3;border-radius:1.2px"></div>
<svg class="a" style="left:163.10px;top:72.10px" width="6.80" height="6.80" viewBox="0 0 8 8"><rect x="1.6" y="0.4" width="2.4" height="2.4" fill="#4f86c6"/><rect x="5" y="0.4" width="2.4" height="2.4" fill="#4f86c6"/><rect x="5" y="4.6" width="2.4" height="2.4" fill="#4f86c6"/><path d="M0.6,7.6L3.2,5" stroke="#d0a020" stroke-width="0.9"/></svg>
<svg class="a" style="left:173.40px;top:72.10px" width="6.80" height="6.80" viewBox="0 0 8 8"><rect x="0.6" y="1.4" width="5.4" height="5.4" fill="#dde8f4" stroke="#8aa0c0" stroke-width="0.4"/><rect x="1.2" y="3.4" width="3" height="2.2" fill="#e8c030"/><rect x="4.6" y="4.4" width="3" height="3.2" fill="#4f86c6"/></svg>
<svg class="a" style="left:184.10px;top:72.10px" width="6.80" height="6.80" viewBox="0 0 8 8"><path d="M1.2,1 L7,7" stroke="#d02a2a" stroke-width="1.2"/><path d="M1.2,1 L3,2.8" stroke="#777" stroke-width="1.3"/></svg>
<svg class="a" style="left:194.60px;top:72.10px" width="6.80" height="6.80" viewBox="0 0 8 8"><path d="M2.4,1.2 L6.6,4 L2.4,6.8z" fill="#222"/></svg>
<svg class="a" style="left:204.60px;top:72.10px" width="6.80" height="6.80" viewBox="0 0 8 8"><circle cx="3.8" cy="3.6" r="2.8" fill="#4f86c6"/><path d="M2.6,2.4 L4.4,4.6" stroke="#dde8f4" stroke-width="0.8"/><path d="M5.8,5.6 L7.4,7.2" stroke="#ddd" stroke-width="0.9"/></svg>
<div class="a" style="left:159.40px;top:81.00px;width:431.60px;height:176.80px;background:#fdfdfc;border:0.7px solid #dededd"></div>
<div class="a" style="left:159.40px;top:259.90px;width:431.60px;height:178.40px;background:#fdfdfc;border:0.8px solid #d4d4d3"></div>
<div class="a" style="left:591.20px;top:70.00px;width:0.80px;height:368.00px;background:#d8d8d7"></div>
<div class="a" style="left:593.30px;top:82.00px;width:0.90px;height:356.00px;background:#fafaf9"></div>
<div class="t" style="left:594.70px;top:62.98px;font-size:5.8px;color:#222;font-weight:normal;">Layer Styling</div>
<svg class="a" style="left:788.5px;top:62.3px" width="11" height="5.6" viewBox="0 0 11 5.6"><rect x="0.3" y="0.3" width="5" height="5" rx="1.6" fill="#c4c4c3" stroke="#a6a6a5" stroke-width="0.4"/><rect x="1.6" y="1.6" width="2.4" height="2.4" fill="none" stroke="#eee" stroke-width="0.45"/><rect x="5.7" y="0.3" width="5" height="5" rx="1.6" fill="#c4c4c3" stroke="#a6a6a5" stroke-width="0.4"/><path d="M7,1.6L9.4,4M9.4,1.6L7,4" stroke="#555" stroke-width="0.6"/></svg>
<div class="a" style="left:594.30px;top:70.40px;width:204.30px;height:10.20px;background:linear-gradient(#fafaf9,#efefee);border:0.6px solid #c2c2c1;border-radius:1.5px"></div>
<svg class="a" style="left:596.9px;top:72.6px" width="6.6" height="5" viewBox="0 0 6.6 5"><path d="M2.4,0.8 A1.7,1.7 0 1 0 2.4,4.2 H6 V0.8z" fill="none" stroke="#8a8a8a" stroke-width="0.6"/><path d="M2.6,2.5H5.4" stroke="#aaa" stroke-width="0.5"/></svg>
<div class="t" style="left:604.70px;top:72.98px;font-size:5.8px;color:#222;font-weight:normal;">parlamento_berlino</div>
<svg class="a" style="left:792.00px;top:74.50px" width="3.2" height="2" viewBox="0 0 3.2 2"><path d="M0,0H3.2L1.6,2z" fill="#444"/></svg>
<div class="a" style="left:594.90px;top:82.80px;width:15.50px;height:343.00px;background:#5a5a57"></div>
<div class="a" style="left:594.90px;top:103.00px;width:15.50px;height:10.00px;background:#efefee"></div>
<svg class="a" style="left:595.80px;top:83.70px" width="7.60" height="7.60" viewBox="0 0 8 8"><path d="M1,5 L4.5,6.8 L7.4,1.2" fill="none" stroke="#f0c030" stroke-width="1"/><circle cx="2.2" cy="5" r="1.4" fill="#d8412f"/><circle cx="3" cy="3.8" r="1" fill="#4f86c6"/></svg>
<svg class="a" style="left:595.80px;top:93.80px" width="7.60" height="7.60" viewBox="0 0 8 8"><ellipse cx="4" cy="4.6" rx="3.4" ry="2" fill="#f0cf3a"/><path d="M2,4.6h4" stroke="#9a7a10" stroke-width="0.6"/></svg>
<svg class="a" style="left:595.80px;top:104.20px" width="7.60" height="7.60" viewBox="0 0 8 8"><circle cx="4" cy="4" r="3.3" fill="#7bbf5f"/><path d="M0.8,3.6 L4,0.8 L7.2,3.6 L4,5.2z" fill="#c85ab0"/><path d="M4,5.2 V7.3" stroke="#e8a030" stroke-width="1"/></svg>
<svg class="a" style="left:595.80px;top:114.00px" width="7.60" height="7.60" viewBox="0 0 8 8"><circle cx="4" cy="2" r="1.6" fill="#e05a2a"/><path d="M1,4.4 L4,3 L7,4.4 L4,6z" fill="#f0c030"/><rect x="4.6" y="5.4" width="2.8" height="2.2" fill="#4f86c6"/><rect x="0.6" y="5.4" width="2.4" height="2.2" fill="#d8412f"/></svg>
<svg class="a" style="left:595.80px;top:124.40px" width="7.60" height="7.60" viewBox="0 0 8 8"><path d="M1,1.5 L4,4.5 L3,6 L0.5,3.5z" fill="#6ab04c"/><path d="M3,3 L7,6.5 L5.5,7.5 L2.5,4.5z" fill="#e8702a"/></svg>
<div class="a" style="left:615.60px;top:88.20px;width:5.60px;height:5.60px;background:#fff;border:0.6px solid #b8b8b7;border-radius:0.8px"></div>
<svg class="a" style="left:616.2px;top:88.7px" width="4.3999999999999995" height="4.6" viewBox="0 0 8 8"><path d="M1,4.4 L3,6.8 L7,0.8" fill="none" stroke="#111" stroke-width="2"/></svg>
<div class="t" style="left:623.40px;top:88.98px;font-size:5.8px;color:#222;font-weight:normal;">Enable 3D Renderer</div>
<div class="t" style="left:618.70px;top:105.28px;font-size:5.8px;color:#222;font-weight:normal;">Height</div>
<div class="t" style="left:618.70px;top:118.48px;font-size:5.8px;color:#222;font-weight:normal;">Extrusion</div>
<div class="a" style="left:699.00px;top:102.20px;width:77.10px;height:9.30px;background:#fdfdfc;border:0.6px solid #c4c4c3;border-radius:1.5px"></div>
<div class="t" style="left:700.90px;top:104.93px;font-size:5.8px;color:#222;font-weight:normal;">0.00</div>
<div class="a" style="left:771.30px;top:103.20px;width:0.50px;height:7.30px;background:#d8d8d7"></div>
<svg class="a" style="left:772.1px;top:104.35000000000001px" width="3" height="5" viewBox="0 0 3 5"><path d="M0.2,2H2.8L1.5,0.4z M0.2,3H2.8L1.5,4.6z" fill="#555"/></svg>
<svg class="a" style="left:779.8000000000001px;top:103.10000000000001px" width="10" height="8" viewBox="0 0 10 8"><path d="M0.6,3.8 L2.6,1 H7.4 V6.8 H2.6z" fill="#dcdcdb" stroke="#707070" stroke-width="0.55"/><rect x="3.4" y="1.8" width="3.4" height="4.4" fill="#fafaf9" stroke="#9a9a9a" stroke-width="0.35"/><path d="M3.8,3H6.4M3.8,4.2H6.4M3.8,5.4H6.4" stroke="#aaa" stroke-width="0.35"/><path d="M6.6,5.8H9.6L8.1,7.6z" fill="#333"/></svg>
<div class="a" style="left:699.00px;top:115.70px;width:77.10px;height:8.70px;background:#fdfdfc;border:0.6px solid #c4c4c3;border-radius:1.5px"></div>
<div class="t" style="left:700.90px;top:118.13px;font-size:5.8px;color:#222;font-weight:normal;">0.00</div>
<div class="a" style="left:771.30px;top:116.70px;width:0.50px;height:6.70px;background:#d8d8d7"></div>
<svg class="a" style="left:772.1px;top:117.55px" width="3" height="5" viewBox="0 0 3 5"><path d="M0.2,2H2.8L1.5,0.4z M0.2,3H2.8L1.5,4.6z" fill="#555"/></svg>
<svg class="a" style="left:779.8000000000001px;top:116.2px" width="10" height="8" viewBox="0 0 10 8"><path d="M0.6,3.8 L2.6,1 H7.4 V6.8 H2.6z" fill="#dcdcdb" stroke="#707070" stroke-width="0.55"/><rect x="3.4" y="1.8" width="3.4" height="4.4" fill="#fafaf9" stroke="#9a9a9a" stroke-width="0.35"/><path d="M3.8,3H6.4M3.8,4.2H6.4M3.8,5.4H6.4" stroke="#aaa" stroke-width="0.35"/><path d="M6.6,5.8H9.6L8.1,7.6z" fill="#333"/></svg>
<div class="t" style="left:618.70px;top:131.18px;font-size:5.8px;color:#222;font-weight:normal;">Altitude clamping</div>
<div class="t" style="left:618.70px;top:143.28px;font-size:5.8px;color:#222;font-weight:normal;">Altitude binding</div>
<div class="t" style="left:618.70px;top:155.38px;font-size:5.8px;color:#222;font-weight:normal;">Culling mode</div>
<div class="a" style="left:699.00px;top:128.50px;width:76.80px;height:9.30px;background:linear-gradient(#fafaf9,#efefee);border:0.6px solid #c2c2c1;border-radius:1.5px"></div>
<div class="t" style="left:700.90px;top:131.23px;font-size:5.8px;color:#222;font-weight:normal;">Relative</div>
<svg class="a" style="left:769.40px;top:132.35px" width="3.2" height="2" viewBox="0 0 3.2 2"><path d="M0,0H3.2L1.6,2z" fill="#444"/></svg>
<div class="a" style="left:699.00px;top:140.60px;width:76.80px;height:9.30px;background:linear-gradient(#fafaf9,#efefee);border:0.6px solid #c2c2c1;border-radius:1.5px"></div>
<div class="t" style="left:700.90px;top:143.33px;font-size:5.8px;color:#222;font-weight:normal;">Centroid</div>
<svg class="a" style="left:769.40px;top:144.45px" width="3.2" height="2" viewBox="0 0 3.2 2"><path d="M0,0H3.2L1.6,2z" fill="#444"/></svg>
<div class="a" style="left:699.00px;top:152.70px;width:76.80px;height:9.30px;background:linear-gradient(#fafaf9,#efefee);border:0.6px solid #c2c2c1;border-radius:1.5px"></div>
<div class="t" style="left:700.90px;top:155.43px;font-size:5.8px;color:#222;font-weight:normal;">No culling</div>
<svg class="a" style="left:769.40px;top:156.55px" width="3.2" height="2" viewBox="0 0 3.2 2"><path d="M0,0H3.2L1.6,2z" fill="#444"/></svg>
<div class="a" style="left:618.70px;top:166.30px;width:5.60px;height:5.60px;background:#fff;border:0.6px solid #b8b8b7;border-radius:0.8px"></div>
<div class="t" style="left:626.90px;top:167.08px;font-size:5.8px;color:#222;font-weight:normal;">Add back faces</div>
<div class="a" style="left:618.70px;top:177.60px;width:5.60px;height:5.60px;background:#fff;border:0.6px solid #b8b8b7;border-radius:0.8px"></div>
<div class="t" style="left:626.90px;top:178.58px;font-size:5.8px;color:#222;font-weight:normal;">Invert normals (experimental)</div>
<div class="a" style="left:618.70px;top:187.00px;width:172.20px;height:0.70px;background:#c8c8c7"></div>
<div class="t" style="left:623.00px;top:198.48px;font-size:5.8px;color:#222;font-weight:normal;">Diffuse</div>
<div class="t" style="left:623.00px;top:212.78px;font-size:5.8px;color:#222;font-weight:normal;">Ambient</div>
<div class="t" style="left:623.00px;top:226.98px;font-size:5.8px;color:#222;font-weight:normal;">Specular</div>
<div class="t" style="left:623.00px;top:240.48px;font-size:5.8px;color:#222;font-weight:normal;">Shininess</div>
<div class="a" style="left:649.70px;top:195.60px;width:132.60px;height:10.70px;background:linear-gradient(#fbfbfa,#f0f0ef);border:0.6px solid #c6c6c5;border-radius:1.5px"></div>
<div class="a" style="left:651.30px;top:197.50px;width:128.70px;height:6.60px;background:#cbcbca;border-radius:0.8px"></div>
<div class="a" style="left:782.60px;top:195.60px;width:4.70px;height:10.70px;background:linear-gradient(#fbfbfa,#f0f0ef);border:0.6px solid #c6c6c5;border-radius:1px"></div>
<svg class="a" style="left:783.40px;top:199.95px" width="3.2" height="2" viewBox="0 0 3.2 2"><path d="M0,0H3.2L1.6,2z" fill="#444"/></svg>
<div class="a" style="left:649.70px;top:209.80px;width:132.60px;height:10.60px;background:linear-gradient(#fbfbfa,#f0f0ef);border:0.6px solid #c6c6c5;border-radius:1.5px"></div>
<div class="a" style="left:651.30px;top:211.70px;width:128.70px;height:6.50px;background:#5c5c5a;border-radius:0.8px"></div>
<div class="a" style="left:782.60px;top:209.80px;width:4.70px;height:10.60px;background:linear-gradient(#fbfbfa,#f0f0ef);border:0.6px solid #c6c6c5;border-radius:1px"></div>
<svg class="a" style="left:783.40px;top:214.10px" width="3.2" height="2" viewBox="0 0 3.2 2"><path d="M0,0H3.2L1.6,2z" fill="#444"/></svg>
<div class="a" style="left:649.70px;top:223.80px;width:132.60px;height:10.60px;background:#fdfdfc;border:0.6px solid #c6c6c5;border-radius:1.5px"></div>
<div class="a" style="left:782.60px;top:223.80px;width:4.70px;height:10.60px;background:linear-gradient(#fbfbfa,#f0f0ef);border:0.6px solid #c6c6c5;border-radius:1px"></div>
<svg class="a" style="left:783.40px;top:228.10px" width="3.2" height="2" viewBox="0 0 3.2 2"><path d="M0,0H3.2L1.6,2z" fill="#444"/></svg>
<div class="a" style="left:649.40px;top:238.10px;width:137.90px;height:8.50px;background:#fdfdfc;border:0.6px solid #c4c4c3;border-radius:1.5px"></div>
<div class="t" style="left:651.20px;top:240.48px;font-size:5.8px;color:#222;font-weight:normal;">0.00</div>
<div class="a" style="left:783.00px;top:239.00px;width:0.50px;height:6.70px;background:#d8d8d7"></div>
<svg class="a" style="left:784px;top:240px" width="3" height="5" viewBox="0 0 3 5"><path d="M0.2,2H2.8L1.5,0.4z" fill="#666"/><path d="M0.2,3H2.8L1.5,4.6z" fill="#bbb"/></svg>
<div class="a" style="left:612.00px;top:416.90px;width:9.00px;height:8.20px;background:linear-gradient(#fbfbfa,#efefee);border:0.6px solid #cacac9;border-radius:1.2px"></div>
<div class="a" style="left:624.40px;top:416.90px;width:8.90px;height:8.20px;background:linear-gradient(#fbfbfa,#efefee);border:0.6px solid #cacac9;border-radius:1.2px"></div>
<svg class="a" style="left:613.70px;top:418.20px" width="5.60" height="5.60" viewBox="0 0 8 8"><path d="M6.8,6.6 C6.8,3.4 4.5,3 2,3.4" fill="none" stroke="#f07a2a" stroke-width="1.2"/><path d="M0.4,3.6 L3,1.4 L3.2,5.6z" fill="#f07a2a"/></svg>
<svg class="a" style="left:626.00px;top:418.20px" width="5.60" height="5.60" viewBox="0 0 8 8"><path d="M1.4,5.6 A2.6,2.6 0 0 1 6,2" fill="none" stroke="#5ab04a" stroke-width="1.1"/><path d="M6.6,2.4 A2.6,2.6 0 0 1 2,6" fill="none" stroke="#4f86c6" stroke-width="1.1"/></svg>
<div class="a" style="left:723.00px;top:418.40px;width:5.40px;height:5.40px;background:#fff;border:0.6px solid #b8b8b7;border-radius:0.8px"></div>
<svg class="a" style="left:723.6px;top:418.9px" width="4.2" height="4.4" viewBox="0 0 8 8"><path d="M1,4.4 L3,6.8 L7,0.8" fill="none" stroke="#111" stroke-width="2"/></svg>
<div class="t" style="left:730.60px;top:418.98px;font-size:5.8px;color:#222;font-weight:normal;">Live update</div>
<div class="a" style="left:765.40px;top:416.20px;width:32.80px;height:9.60px;background:linear-gradient(#fcfcfb,#f0f0ef);border:0.6px solid #c2c2c1;border-radius:1.5px"></div>
<svg class="a" style="left:771px;top:417.5px" width="7" height="7" viewBox="0 0 7 7"><path d="M0.6,3.8 L2.4,6.6 L6.6,0.4" fill="none" stroke="#3f8f2f" stroke-width="1.2"/></svg>
<div class="t" style="left:778.00px;top:419.28px;font-size:5.8px;color:#222;font-weight:normal;">Apply</div>
<div class="a" style="left:593.90px;top:427.30px;width:206.00px;height:0.60px;background:#d0d0cf"></div>
<div class="a" style="left:636.00px;top:428.60px;width:58.50px;height:8.90px;background:#e1e1e0;border:0.5px solid #d0d0cf;border-radius:1px 1px 0 0"></div>
<div class="a" style="left:694.80px;top:428.60px;width:48.80px;height:8.90px;background:#e1e1e0;border:0.5px solid #d0d0cf;border-radius:1px 1px 0 0"></div>
<div class="a" style="left:744.30px;top:428.60px;width:30.30px;height:8.90px;background:#e1e1e0;border:0.5px solid #d0d0cf;border-radius:1px 1px 0 0"></div>
<div class="a" style="left:593.90px;top:427.90px;width:42.10px;height:10.30px;background:#f4f4f3;border:0.6px solid #d0d0cf;border-bottom:none;border-radius:1px 1px 0 0"></div>
<div class="t" style="left:598.30px;top:431.38px;font-size:5.8px;color:#222;font-weight:normal;">Layer Styling</div>
<div class="t" style="left:641.00px;top:431.18px;font-size:5.8px;color:#222;font-weight:normal;">Processing Toolbox</div>
<div class="t" style="left:699.60px;top:431.18px;font-size:5.8px;color:#222;font-weight:normal;">Identify Results</div>
<div class="t" style="left:749.10px;top:431.18px;font-size:5.8px;color:#222;font-weight:normal;">Browser</div>
<div class="a" style="left:0.00px;top:440.30px;width:90.80px;height:9.30px;background:#fdfdfc;border:0.6px solid #cfcfce;border-radius:1.5px"></div>
<svg class="a" style="left:2.8px;top:442.3px" width="5" height="5" viewBox="0 0 5 5"><circle cx="2" cy="2" r="1.5" fill="none" stroke="#777" stroke-width="0.6"/><path d="M3.1,3.1L4.6,4.6" stroke="#777" stroke-width="0.7"/></svg>
<div class="t" style="left:11.70px;top:443.08px;font-size:5.8px;color:#8a8a8a;font-weight:normal;">Type to locate (Ctrl+K)</div>
<div class="t" style="left:419.30px;top:443.08px;font-size:5.8px;color:#222;font-weight:normal;">Coordinate</div>
<div class="a" style="left:447.50px;top:440.50px;width:46.70px;height:9.10px;background:#fdfdfc;border:0.6px solid #c8c8c7;border-radius:1.5px"></div>
<div class="t" style="left:449.50px;top:443.08px;font-size:5.8px;color:#222;font-weight:normal;">389292.5819760</div>
<svg class="a" style="left:496.3px;top:441.5px" width="7" height="7" viewBox="0 0 7 7"><circle cx="3.2" cy="3.2" r="2.6" fill="#777"/><path d="M1,2.2H5.4M1.2,4.2H5.2M3.2,0.6V5.8" stroke="#ddd" stroke-width="0.4"/><circle cx="5.2" cy="5.2" r="1.3" fill="#555"/></svg>
<div class="t" style="left:509.00px;top:443.08px;font-size:5.8px;color:#222;font-weight:normal;">Scale</div>
<div class="a" style="left:524.00px;top:440.50px;width:39.30px;height:9.10px;background:#fdfdfc;border:0.6px solid #c8c8c7;border-radius:1.5px"></div>
<div class="t" style="left:525.40px;top:443.08px;font-size:5.8px;color:#222;font-weight:normal;">1:4732</div>
<div class="a" style="left:555.50px;top:441.30px;width:0.50px;height:7.50px;background:#d8d8d7"></div>
<svg class="a" style="left:557.60px;top:444.20px" width="3.2" height="2" viewBox="0 0 3.2 2"><path d="M0,0H3.2L1.6,2z" fill="#444"/></svg>
<svg class="a" style="left:566px;top:441.3px" width="5.5" height="7" viewBox="0 0 5.5 7"><path d="M1.2,3V2A1.55,1.55 0 0 1 4.3,2V3" fill="none" stroke="#555" stroke-width="0.7"/><rect x="0.5" y="3" width="4.5" height="3.6" rx="0.5" fill="#555"/></svg>
<div class="t" style="left:577.70px;top:443.08px;font-size:5.8px;color:#222;font-weight:normal;">Magnifier</div>
<div class="a" style="left:603.00px;top:440.50px;width:39.30px;height:8.70px;background:#fdfdfc;border:0.6px solid #c4c4c3;border-radius:1.5px"></div>
<div class="t" style="left:604.90px;top:442.93px;font-size:5.8px;color:#222;font-weight:normal;">100%</div>
<div class="a" style="left:637.50px;top:441.50px;width:0.50px;height:6.70px;background:#d8d8d7"></div>
<svg class="a" style="left:638.3px;top:442.35px" width="3" height="5" viewBox="0 0 3 5"><path d="M0.2,2H2.8L1.5,0.4z M0.2,3H2.8L1.5,4.6z" fill="#555"/></svg>
<div class="t" style="left:645.70px;top:443.08px;font-size:5.8px;color:#222;font-weight:normal;">Rotation</div>
<div class="a" style="left:671.80px;top:440.50px;width:36.80px;height:8.70px;background:#fdfdfc;border:0.6px solid #c4c4c3;border-radius:1.5px"></div>
<div class="t" style="left:673.70px;top:442.93px;font-size:5.8px;color:#222;font-weight:normal;">0.0 °</div>
<div class="a" style="left:703.80px;top:441.50px;width:0.50px;height:6.70px;background:#d8d8d7"></div>
<svg class="a" style="left:704.5999999999999px;top:442.35px" width="3" height="5" viewBox="0 0 3 5"><path d="M0.2,2H2.8L1.5,0.4z M0.2,3H2.8L1.5,4.6z" fill="#555"/></svg>
<div class="a" style="left:712.00px;top:442.20px;width:5.40px;height:5.40px;background:#fff;border:0.6px solid #b8b8b7;border-radius:0.8px"></div>
<svg class="a" style="left:712.6px;top:442.7px" width="4.2" height="4.4" viewBox="0 0 8 8"><path d="M1,4.4 L3,6.8 L7,0.8" fill="none" stroke="#111" stroke-width="2"/></svg>
<div class="t" style="left:719.60px;top:443.08px;font-size:5.8px;color:#222;font-weight:normal;">Render</div>
<svg class="a" style="left:745.7px;top:441.8px" width="6" height="6" viewBox="0 0 6 6"><path d="M3,0.3 L5.7,3 L3,5.7 L0.3,3z" fill="#8a8a8a"/></svg>
<div class="t" style="left:753.30px;top:443.08px;font-size:5.8px;color:#222;font-weight:normal;">EPSG:3006</div>
<svg class="a" style="left:789.7px;top:441.5px" width="7" height="7" viewBox="0 0 7 7"><path d="M0.5,3 C0.5,1 2,0.5 3.5,0.5 C5,0.5 6.5,1 6.5,3 C6.5,5 5,5.4 3.5,5.4 L1.8,6.6 L2,5.2 C1,4.8 0.5,4 0.5,3z" fill="#666"/><path d="M2,2.6H5M2,3.6H4.5" stroke="#ddd" stroke-width="0.4"/></svg>
<svg class="a" style="left:0;top:0" width="800" height="451" viewBox="0 0 800 451">
<defs><clipPath id="c3"><rect x="160" y="82" width="431" height="175"/></clipPath>
<clipPath id="c2"><rect x="160" y="261" width="431" height="176"/></clipPath></defs>
<g clip-path="url(#c3)" stroke-linejoin="round">
   <!-- Reichstag footprint -->
 <polygon points="273,192.7 280.5,186.7 284.2,186 300,180 361.7,186.8 367.5,189.4 370,193.75 361.25,200 341.25,218.75 342.5,221.25 335,227.5 328.75,228.1 322.5,224.4 310,213.75 303.75,213.1 300,215.6 288.75,208.5 291.75,204.75" fill="#7dbf62" stroke="#22261f" stroke-width="0.7"/>
 <polyline points="275.5,192.5 296.25,200.5 332.5,213.5 356.5,196.5 367,191" fill="none" stroke="#2f3a2c" stroke-width="0.4"/>
 <polygon points="332.5,213.5 334.5,225 361,200 356.5,196.5" fill="#8acb70" stroke="#2f3a2c" stroke-width="0.3"/>
 <polyline points="291.75,204.75 300,209 310,213.75" fill="none" stroke="#22261f" stroke-width="0.45"/>
 <polygon points="296.5,201 311,206.5 313,212 302,209" fill="#86c66b" stroke="#2f3a2c" stroke-width="0.3"/>
 <!-- body silhouette -->
 <polygon points="262,151 276.6,148.2 282,152 299,144.5 315,144 323.3,148.3 332.4,143.3 341.8,146.9 353.7,152.2 367,153.6 369.7,165.5 368.4,182.8 356.5,195.5 332.5,211.5 296,198.5 279.3,185.5 266,178.8 262,168.2" fill="#6c6c6c"/>
 <!-- front-left facade -->
 <polygon points="262,162 271,167 316,183.5 325,187 332.5,211.5 296,198.5 279.3,185.5 266,178.8 262,168" fill="#717171"/>
 <polyline points="263,166 271.5,170 317,186.5 326,190" fill="none" stroke="#9c9c9c" stroke-width="0.7"/>
 <polyline points="267,176 279,182 320,199 328,203" fill="none" stroke="#7e7e7e" stroke-width="0.5"/>
 <polygon points="282,177 297,183 298,194 283,188" fill="#5a5a5a"/>
 <path d="M285,185 l1,0.4 M287.5,186 l1,0.4 M290,187 l1,0.4 M292.5,188 l1,0.4" stroke="#a0a0a0" stroke-width="0.5"/>
 <!-- front-right facade -->
 <polygon points="326,187 334,182.5 368,163.5 369.5,165.5 368.4,182.8 356.5,195.5 332.5,211.5" fill="#7a7a7a"/>
 <polyline points="333,186 352,175.5 368.5,166.5" fill="none" stroke="#a2a2a2" stroke-width="0.7"/>
 <polyline points="333,195 350,185.5 368,175.5" fill="none" stroke="#828282" stroke-width="0.5"/>
 <!-- roof -->
 <polygon points="268,158 286,152 300,146 315,145 340,150.5 352,155 360,160 334,176.5 318,180 279,164" fill="#b6b6b5"/>
 <polygon points="279,155 299,146 301,148.5 281,157.5" fill="#b0b0af"/>
 <polygon points="315,145 323,149 341,149.5 352,153 350,156 338,152 314,147" fill="#adadac"/>
 <polyline points="279,164 318,180 334,176.5 360,160" fill="none" stroke="#d2d2d1" stroke-width="0.6"/>
 <polygon points="283.5,157.5 298,150.5 304.5,153.5 290,160.5" fill="#6e6e6e"/>
 <polygon points="283.5,157.5 298,150.5 298.5,152 285,158.5" fill="#575757"/>
 <polygon points="320,169.6 334.1,161.3 348.2,164.1 334.1,173.2" fill="#6e6e6e"/>
 <polygon points="334.1,161.3 348.2,164.1 346.5,165 334.5,162.7" fill="#8e8e8e"/>
 <polygon points="320,169.6 334.1,161.3 334.5,162.7 322,170" fill="#585858"/>
<!-- dome -->
 <path d="M301.7,163.3 C301,155 305,145 312.5,144.1 C320,144 327,149 329.1,158.3 L327.4,162.4 C318,166.5 308,166 301.7,163.3 Z" fill="#5f5f5f"/>
 <path d="M312.2,161.5 h5.4 M314.9,158.8 v5.4" stroke="#f0f0f0" stroke-width="0.7"/>
 <!-- small roof block -->
 <polygon points="323.3,148.3 332.4,143.3 340.7,147.5 332.4,151.6" fill="#bcbcbb"/>
 <polygon points="323.3,148.3 332.4,151.6 332.4,154 323.3,150.5" fill="#7c7c7c"/>
 <polygon points="332.4,151.6 340.7,147.5 340.7,150 332.4,154" fill="#8a8a8a"/>
 <!-- towers -->
 <polygon points="261.7,154.1 270.8,158.3 270.8,170.3 261.7,164.6" fill="#7e7e7e"/>
 <polygon points="270.8,158.3 279.1,153.3 279.1,163.8 270.8,170.3" fill="#676767"/>
 <path d="M262.7,155.29999999999998 L270.8,159.5 L278.1,154.5" fill="none" stroke="#9c9c9c" stroke-width="0.6"/>
 <polygon points="261.7,154.1 270,149.2 279.1,153.3 270.8,158.3" fill="#b4b4b3"/>
 <polygon points="263.9,154.1 270,150.5 276.90000000000003,153.3 270.8,157.0" fill="#959594"/>
 <ellipse cx="270.40" cy="153.75" rx="1.7" ry="0.9" fill="#555"/>
 <path d="M263.2,157.6 v6 M267.8,160.3 v8 M273.8,159.3 v8" stroke="#737373" stroke-width="0.4"/>
 <polygon points="299,136 307,139.5 307,148.5 299,143.5" fill="#7e7e7e"/>
 <polygon points="307,139.5 314.5,135.2 314.5,142.7 307,148.5" fill="#676767"/>
 <path d="M300,137.2 L307,140.7 L313.5,136.39999999999998" fill="none" stroke="#9c9c9c" stroke-width="0.6"/>
 <polygon points="299,136 306.5,132 314.5,135.2 307,139.5" fill="#b4b4b3"/>
 <polygon points="301.2,136 306.5,133.3 312.3,135.2 307,138.2" fill="#959594"/>
 <ellipse cx="306.75" cy="135.75" rx="1.7" ry="0.9" fill="#555"/>
 <path d="M300.5,139.5 v3 M304,141.5 v5 M310,140.5 v5" stroke="#737373" stroke-width="0.4"/>
 <polygon points="351.6,154.9 359.9,158.3 359.9,168.3 351.6,163.4" fill="#7e7e7e"/>
 <polygon points="359.9,158.3 367.4,154.1 367.4,162.6 359.9,168.3" fill="#676767"/>
 <path d="M352.6,156.1 L359.9,159.5 L366.4,155.29999999999998" fill="none" stroke="#9c9c9c" stroke-width="0.6"/>
 <polygon points="351.6,154.9 359,151.3 367.4,154.1 359.9,158.3" fill="#b4b4b3"/>
 <polygon points="353.8,154.9 359,152.60000000000002 365.2,154.1 359.9,157.0" fill="#959594"/>
 <ellipse cx="359.50" cy="154.80" rx="1.7" ry="0.9" fill="#555"/>
 <path d="M353.1,158.4 v4 M356.9,160.3 v6 M362.9,159.3 v6" stroke="#737373" stroke-width="0.4"/>
 <polygon points="316.6,178.2 325.8,182.4 325.8,194.4 316.6,188.7" fill="#7e7e7e"/>
 <polygon points="325.8,182.4 334.1,177.4 334.1,187.9 325.8,194.4" fill="#676767"/>
 <path d="M317.6,179.39999999999998 L325.8,183.6 L333.1,178.6" fill="none" stroke="#9c9c9c" stroke-width="0.6"/>
 <polygon points="316.6,178.2 324.9,174 334.1,177.4 325.8,182.4" fill="#b4b4b3"/>
 <polygon points="318.8,178.2 324.9,175.3 331.90000000000003,177.4 325.8,181.1" fill="#959594"/>
 <ellipse cx="325.35" cy="178.20" rx="1.7" ry="0.9" fill="#555"/>
 <path d="M318.1,181.7 v6 M322.8,184.4 v8 M328.8,183.4 v8" stroke="#737373" stroke-width="0.4"/>
 <!-- separate dark block -->
 <polygon points="344.1,137.5 347.4,135 354.9,131.7 359,132.5 366.5,130 370.7,130.8 370.7,137.5 366.5,140.8 360.7,141.6 359,147.5 356.5,150 344.1,145.8" fill="#5e5e5e"/>
 <polygon points="366.5,130 370.7,130.8 370.7,137.5 366.5,140.8" fill="#6a6a6a"/>
 <polygon points="367,153 371,151 370,155" fill="#6cb54f"/>
 <!-- small building -->
 <polygon points="393,184.7 401,174.4 408,176.7 406.3,182 411.6,182.9 409,188.2" fill="#7dbf62" stroke="#22261f" stroke-width="0.7"/>
 <polygon points="394.8,156.3 402.7,145.3 411.6,147.8 409,152.2 414.3,153.6 412,159" fill="#c4c4c2"/>
 <polygon points="394.8,156.3 412,159 411,171.7 394.8,169" fill="#5b5b59"/>
 <polygon points="412,159 414.3,153.6 413.4,168.7 411,171.7" fill="#686866"/>
 <!-- larger building footprint -->
 <polygon points="427.6,191.8 432.9,177.6 459.5,182.9 461.3,195.3 478.2,199.2 477.6,204.2 459.5,198.9 451.5,197.5" fill="#7dbf62" stroke="#22261f" stroke-width="0.7"/>
 <polygon points="436.5,185.6 451.5,187.9 450.6,191.8 435.6,189.1" fill="#fdfdfc" stroke="#2f3a2c" stroke-width="0.4"/>
 <path d="M429.4,186.5 L459.5,190 M428.5,190 L460,194 M450.6,184.7 L451.5,197.5 M456,184 L457,198 M461.3,195.3 L459.5,198.9 M462,196.5 L477,200.5" fill="none" stroke="#22261f" stroke-width="0.45"/>
 <polygon points="481.7,200.6 486.5,201.5 487,206 482,205" fill="#7dbf62" stroke="#2f3a2c" stroke-width="0.4"/>
 <!-- larger building -->
 <polygon points="431.5,165.5 466.5,172.5 466.5,182.5 431.5,176.7" fill="#5b5b59"/>
 <polygon points="466.5,172.5 487,177.6 484.4,186.5 466.5,182.5" fill="#5d5d5b"/>
 <polygon points="432.6,165.5 443.6,143 473.7,148.8 468,168.4 466.5,172.5" fill="#c4c4c2"/>
 <polyline points="436,157 470,163" fill="none" stroke="#b4b4b2" stroke-width="0.4"/>
 <polygon points="441.8,158 458.6,161.6 457.7,165.2 441.4,162" fill="#5a5a58"/>
 <polygon points="468,168.4 488.8,173.7 487,177.6 466.5,172.5" fill="#c4c4c2"/>
 <polyline points="470.5,171 485,174.6" fill="none" stroke="#8a8a88" stroke-width="0.5"/>
 <path d="M489,179 Q491.5,177 494,178.5 L494,187 Q491.5,189 489,187.5 Z" fill="#5b5b59"/>
 <!-- right group -->
 <polygon points="545.8,204.1 559.9,207.4 565.7,219.9 590.7,228.2 590.7,238.2 550.8,222.4" fill="#7dbf62" stroke="#22261f" stroke-width="0.7"/>
 <path d="M547.5,208 L559,210.5 M550,214 L562,218 M554,207 L557.5,220 M560,220 L590,231.5 M558.5,212 L563,221" fill="none" stroke="#22261f" stroke-width="0.45"/>
 <polygon points="525.8,213.3 550.8,219.9 549.9,225.7 525.8,218.2" fill="#7dbf62" stroke="#22261f" stroke-width="0.7"/>
 <polyline points="528,215.5 548,220.8" fill="none" stroke="#22261f" stroke-width="0.45"/>
 <polygon points="517.5,210 524.1,211 524.1,217.4 517.5,216.5" fill="#7dbf62" stroke="#22261f" stroke-width="0.7"/>
 <path d="M528.3,190 L531,187.5 L535.5,188 L537.5,191 L537.5,197 L534,200 L530,199.5 L528.3,196.5 Z" fill="#5e5e5c"/>
 <polygon points="564,196 590.7,195 590.7,215 564,207.5" fill="#5b5b59"/>
 <polygon points="562.5,176.5 580,180 590.7,191.5 590.7,196 572,195 565,188" fill="#c4c4c2"/>
 <polygon points="557,186 562.5,176.5 565,178.5 565,188 560,189.5" fill="#6d6d6b"/>
 <polygon points="568,181.5 579,183 579,185 567.5,184" fill="#787876"/>
 <path d="M566,185 L570,194 M574,184.5 L577,193 M572,194.8 L590.5,195.8" fill="none" stroke="#9a9a98" stroke-width="0.45"/>
 <polygon points="541.6,186.3 569.9,193.3 569,198.3 539.1,192.5" fill="#c4c4c2"/>
 <polyline points="544,188.6 566.5,194.3" fill="none" stroke="#9a9a98" stroke-width="0.45"/>
 <polygon points="539.1,192.5 569,199.1 568.2,207.4 538.3,200.8" fill="#5b5b59"/>
</g>
<g clip-path="url(#c2)" fill="#7fbd66" stroke="#22261f" stroke-width="0.65" stroke-linejoin="round">
 <!-- 2D Reichstag -->
 <polygon points="339.3,270 338.7,268.5 340.5,267 344.5,267 346,269 364,269 365.5,267 369.5,267 371.2,268.5 370.9,270 370.2,274 370.2,286.8 372.2,286.8 372.2,294.9 370.2,294.9 370.2,309 370.9,312 370.9,313.5 369.5,315 365.5,315 364,313.5 346,313.5 344.5,315 340.5,315 338.7,313.5 339.3,312 340,309 340,295.5 336.2,295.5 336.2,285 340,285 340,274"/>
 <polygon points="349.9,276.3 360.4,276.3 360.4,282.5 349.9,282.5" fill="#fdfdfc"/>
 <polygon points="349.2,298.6 359.8,298.6 359.8,306 349.2,306" fill="#fdfdfc"/>
 <circle cx="354.2" cy="290.3" r="5.6" fill="#80be68" stroke-width="0.55"/>
 <circle cx="352.4" cy="289" r="0.45" fill="#333" stroke="none"/>
 <circle cx="353.9" cy="294.4" r="0.45" fill="#333" stroke="none"/>
 <polyline points="346.1,275 366,275 366,307.9 346.1,307.9 346.1,275" fill="none" stroke-width="0.55"/>
 <path d="M341.8,270.5 346.1,275 M368.8,270.5 366,275 M341.8,311.8 346.1,307.9 M368.8,311.8 366,307.9 M341.8,270.5V311.8 M368.8,270.5V311.8 M341.8,270.5H368.8 M341.8,311.8H368.8" fill="none" stroke-width="0.5"/>
 <polygon points="362.9,287.4 368.5,287.4 368.5,294.9 362.9,294.9" fill="none" stroke-width="0.55"/>
 <!-- small -->
 <polygon points="386.2,283 397.7,284 398.6,287.5 405.7,287.5 405.7,291 391.5,291 391.5,293.7 386.2,293.7"/>
 <polygon points="380.9,322 393.3,320.6 394.1,325.6 387.9,326.5 387.9,330 382.6,330.6"/>
 <!-- flag -->
 <polygon points="385.4,340.8 398,339.9 412.4,338.7 413.8,354.3 399,355.7 395.2,356.4 394.8,366.5 391,366.9 389.2,356.2"/>
 <polygon points="391.5,344.1 395.2,344.1 395.2,351.6 391.5,351.6" fill="#fdfdfc" stroke-width="0.55"/>
 <path d="M398,339.9 399,355.7 M396.6,340 397.2,356 M389.2,356.2H399" fill="none" stroke-width="0.55"/>
 <polygon points="390.6,367.8 395.7,367.8 395.7,370.2 390.6,370.2"/>
 <!-- bottom -->
 <polygon points="392.3,384.3 397,384.3 397,385.9 392.3,385.9"/>
 <polygon points="393,387.6 397,387.6 397,397 393,397"/>
 <polygon points="393.6,397.6 395.6,396.3 411,396.3 411,403.6 401.6,403.6 401.6,413.6 403.6,413.6 403.6,415.6 401.6,415.6 401.6,421.6 413.6,421.6 413.6,429.6 407,429.6 407,431 392.3,431 392.3,428.3 393.6,428.3"/>
 <path d="M396,398 V428 M401.6,421.6 V428.3 M393.6,418 H401.6 M393.6,424 H399 M403,396.3 V403.6 M406,397 V403" fill="none" stroke-width="0.55"/>
 <polygon points="409,429.6 412.5,429.6 412.5,431.5 409,431.5"/>
</g>

</svg>
</div></body></html>
